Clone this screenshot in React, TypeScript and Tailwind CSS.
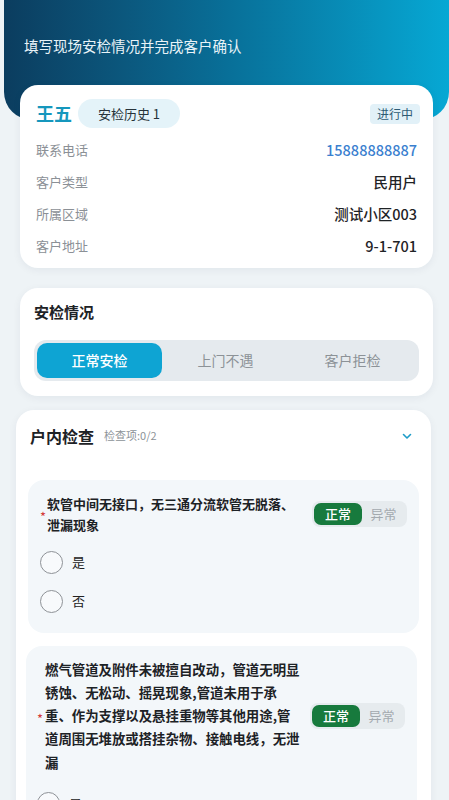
import React from "react";

const font = { fontFamily: '"Noto Sans CJK SC", "Noto Sans", sans-serif' };

function Toggle() {
  return (
    <div className="flex h-[26px] w-[95px] shrink-0 items-center rounded-[8px] bg-[#e6ebee] p-[2px]">
      <div className="flex h-full w-[48px] items-center justify-center rounded-[7px] bg-[#177a3d] text-[13px] font-medium text-white">
        正常
      </div>
      <div className="flex h-full flex-1 items-center justify-center text-[13px] text-[#a3a9ae]">
        异常
      </div>
    </div>
  );
}

function Radio({ label }: { label: string }) {
  return (
    <div className="flex items-center gap-[9px]">
      <div className="h-[23px] w-[23px] rounded-full border border-[#8e9297] bg-white/40" />
      <span className="text-[13px] text-[#222]">{label}</span>
    </div>
  );
}

export default function App() {
  const rows: [string, string, boolean][] = [
    ["联系电话", "15888888887", true],
    ["客户类型", "民用户", false],
    ["所属区域", "测试小区003", false],
    ["客户地址", "9-1-701", false],
  ];
  return (
    <div className="relative h-[800px] w-[449px] overflow-hidden bg-[#eef3f6]" style={font}>
      <div className="ml-1 h-[120px] rounded-b-[28px] bg-linear-to-r from-[#0b3d5f] via-[#086f98] to-[#06a8d4] px-5 pt-[35px]">
        <div className="text-[14.5px] text-[#e8f3f8]">填写现场安检情况并完成客户确认</div>
      </div>

      <div className="-mt-[35px] ml-5 mr-4 rounded-[18px] bg-white px-4 pb-[6px] pt-[14px] shadow-[0_2px_8px_rgba(0,40,70,0.06)]">
        <div className="flex items-center">
          <span className="text-[18px] font-bold text-[#1597bd]">王五</span>
          <div className="ml-[6px] flex h-[29px] w-[102px] items-center justify-center rounded-full bg-[#e4f3f9] text-[13px] text-[#28333a]">
            安检历史 1
          </div>
          <div className="ml-auto mr-[-3px] flex h-[20px] w-[50px] items-center justify-center rounded-[4px] bg-[#e2f1f8] text-[12px] text-[#2d5b74]">
            进行中
          </div>
        </div>
        <div className="mt-[6px] flex flex-col">
          {rows.map(([k, v, blue]) => (
            <div key={k} className="flex h-[32px] items-center justify-between">
              <span className="text-[13px] text-[#8b9096]">{k}</span>
              <span
                className={
                  "text-[14.5px] font-medium " + (blue ? "text-[#3a80cf]" : "text-[#1f2326]")
                }
              >
                {v}
              </span>
            </div>
          ))}
        </div>
      </div>

      <div className="ml-5 mr-4 mt-[20px] rounded-[18px] bg-white px-[14px] pb-[15px] pt-[13px] shadow-[0_2px_8px_rgba(0,40,70,0.06)]">
        <div className="text-[15px] font-bold text-[#1d2226]">安检情况</div>
        <div className="mt-[16px] flex h-[41px] items-center rounded-[12px] bg-[#e5eaee] p-[3px]">
          <div className="flex h-full w-[125px] items-center justify-center rounded-[10px] bg-[#0ea4d3] text-[14px] font-medium text-white">
            正常安检
          </div>
          <div className="flex flex-1 items-center justify-center text-[14px] text-[#8c9297]">上门不遇</div>
          <div className="flex flex-1 items-center justify-center text-[14px] text-[#8c9297]">客户拒检</div>
        </div>
      </div>

      <div className="ml-4 mr-[18px] mt-[14px] rounded-t-[18px] bg-white px-3 pb-6 pt-[14px] shadow-[0_2px_8px_rgba(0,40,70,0.06)]">
        <div className="flex items-center px-[2px]">
          <span className="text-[16px] font-bold text-[#1d2226]">户内检查</span>
          <span className="ml-[10px] text-[11px] text-[#8c9297]">检查项:0/2</span>
          <svg className="ml-auto mr-[4px]" width="12" height="12" viewBox="0 0 12 12" fill="none">
            <path d="M2.5 4.5 L6 8 L9.5 4.5" stroke="#1d9cc8" strokeWidth="1.6" strokeLinecap="round" strokeLinejoin="round" />
          </svg>
        </div>

        <div className="mt-[32px] rounded-[16px] bg-[#f3f7fa] pb-[20px] pl-[12px] pr-[12px] pt-[13px]">
          <div className="flex items-center">
            <span className="mt-[6px] w-[5px] text-[13px] leading-none text-[#d43b3b]">*</span>
            <div className="w-[258px] pl-[2px] text-[13px] font-bold leading-[21px] text-[#1d2226]">
              软管中间无接口，无三通分流软管无脱落、泄漏现象
            </div>
            <div className="ml-auto">
              <Toggle />
            </div>
          </div>
          <div className="mt-[16px] flex flex-col gap-[16px]">
            <Radio label="是" />
            <Radio label="否" />
          </div>
        </div>

        <div className="ml-[-2px] mr-[2px] mt-[13px] rounded-[16px] bg-[#f3f7fa] pb-[20px] pl-[11px] pr-[12px] pt-[12px]">
          <div className="flex items-center">
            <span className="mt-[6px] w-[6px] text-[13px] leading-none text-[#d43b3b]">*</span>
            <div className="w-[258px] pl-[2px] text-[13.4px] font-bold leading-[23.3px] text-[#1d2226]">
              燃气管道及附件未被擅自改动，管道无明显锈蚀、无松动、摇晃现象,管道未用于承重、作为支撑以及悬挂重物等其他用途,管道周围无堆放或搭挂杂物、接触电线，无泄漏
            </div>
            <div className="ml-auto">
              <Toggle />
            </div>
          </div>
          <div className="mt-[18px] flex flex-col gap-[16px]">
            <Radio label="是" />
            <Radio label="否" />
          </div>
        </div>
      </div>
    </div>
  );
}
